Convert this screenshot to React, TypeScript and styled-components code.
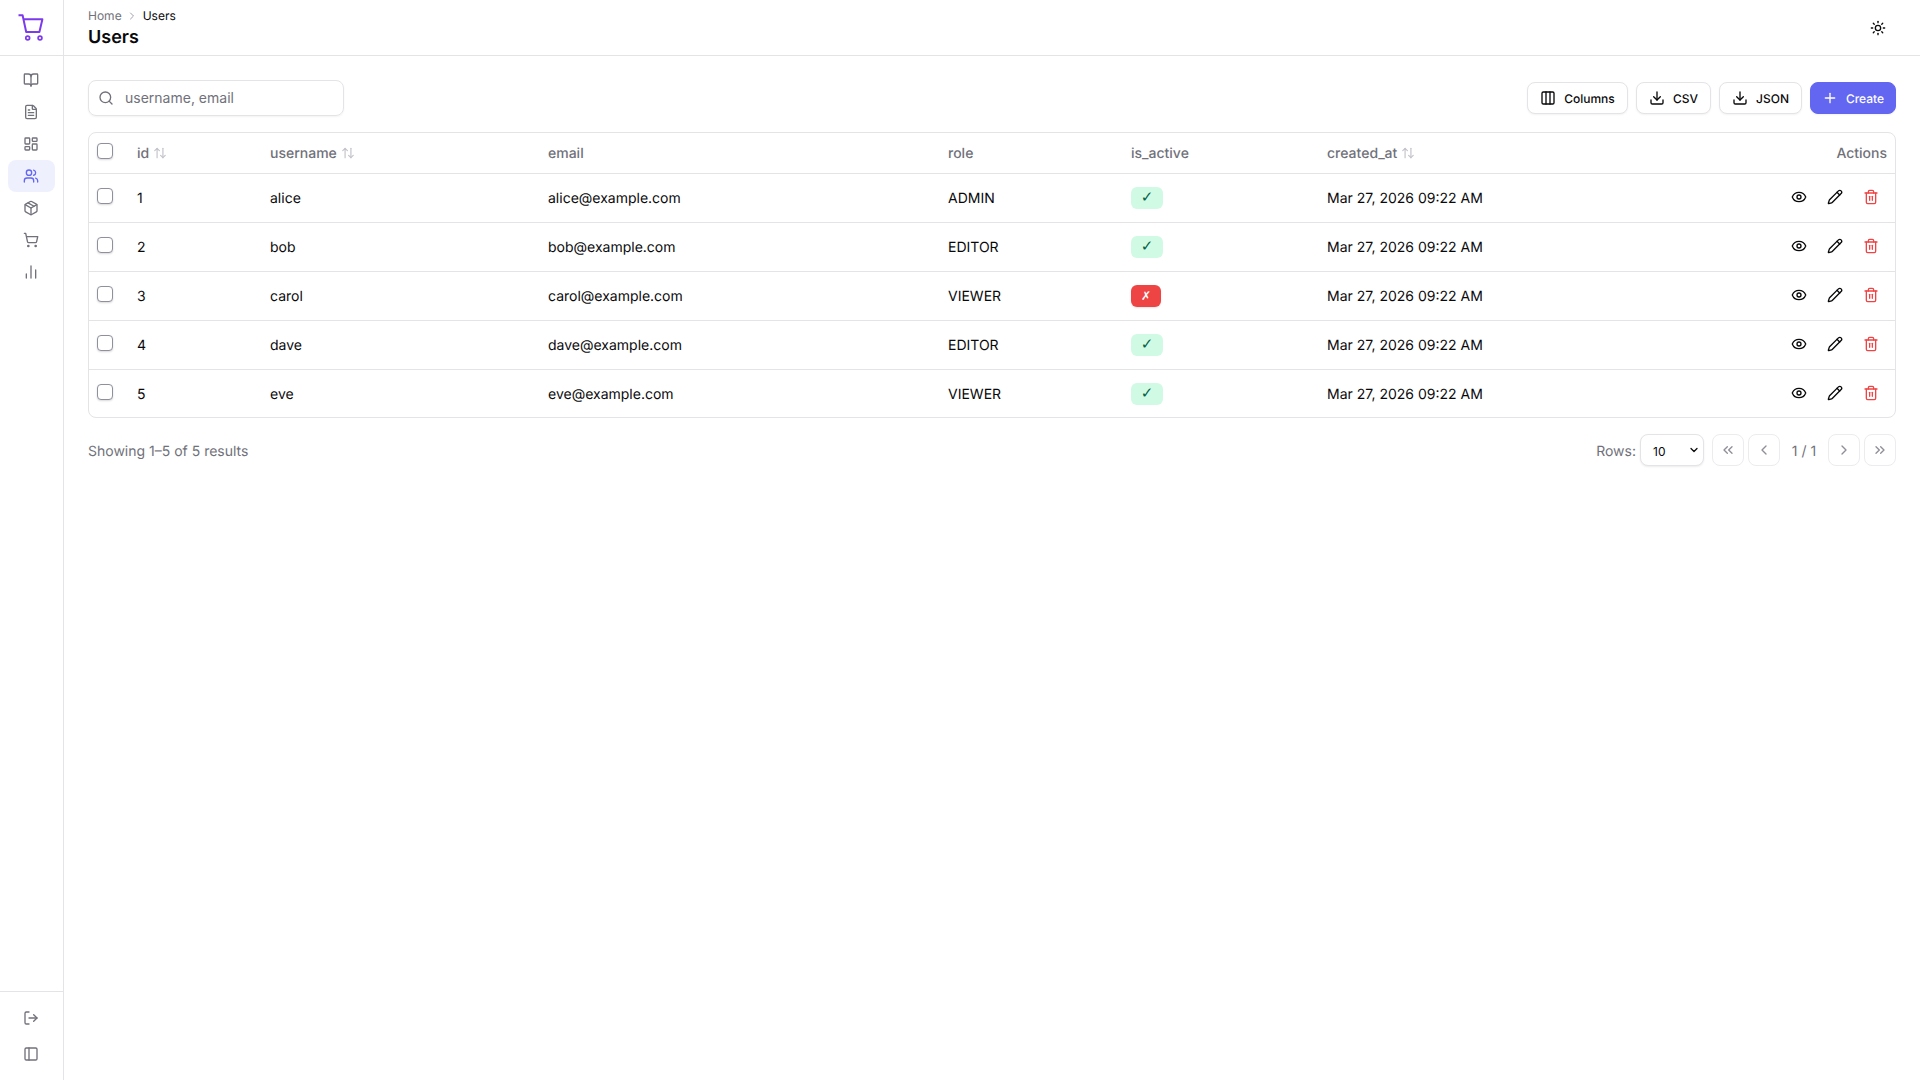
import React from "react";
import styled, { createGlobalStyle } from "styled-components";
import {
  ArrowUpDown,
  BookOpen,
  ChartNoAxesColumn,
  ChevronDown,
  ChevronLeft,
  ChevronRight,
  ChevronsLeft,
  ChevronsRight,
  Columns3,
  Download,
  Eye,
  FileText,
  LayoutDashboard,
  LogOut,
  Package,
  PanelLeft,
  Pencil,
  Plus,
  Search,
  ShoppingCart,
  Sun,
  Trash2,
  Users,
} from "lucide-react";

const GlobalStyle = createGlobalStyle`
  html, body { margin: 0; padding: 0; background: #fff; }
  body {
    font-family: Inter, "Liberation Sans", sans-serif;
    color: #09090b;
    text-rendering: geometricPrecision;
  }
  * { box-sizing: border-box; }
`;

const Shell = styled.div`
  display: flex;
  width: 100%;
  height: 100vh;
  overflow: hidden;
`;

const Sidebar = styled.aside`
  width: 64px;
  flex-shrink: 0;
  display: flex;
  flex-direction: column;
  border-right: 1px solid #e4e4e7;
`;

const LogoBox = styled.div`
  height: 56px;
  display: flex;
  align-items: center;
  justify-content: center;
  padding: 0 2px 0 1px;
  border-bottom: 1px solid #e4e4e7;
  flex-shrink: 0;
`;

const NavList = styled.nav`
  flex: 1;
  display: flex;
  flex-direction: column;
  padding: 8px;
`;

const NavItem = styled.div<{ $active?: boolean }>`
  height: 32px;
  display: flex;
  align-items: center;
  justify-content: center;
  padding-right: 1px;
  border-radius: 8px;
  color: ${(p) => (p.$active ? "#6366f1" : "#71717a")};
  background: ${(p) => (p.$active ? "#eef0fe" : "transparent")};
`;

const SidebarFoot = styled.div`
  border-top: 1px solid #e4e4e7;
  padding: 10px 8px;
  display: flex;
  flex-direction: column;
  gap: 4px;
`;

const Main = styled.div`
  flex: 1;
  min-width: 0;
  display: flex;
  flex-direction: column;
`;

const Header = styled.header`
  height: 56px;
  flex-shrink: 0;
  display: flex;
  align-items: center;
  justify-content: space-between;
  padding: 0 24px;
  border-bottom: 1px solid #e4e4e7;
`;

const HeaderText = styled.div`
  align-self: flex-start;
  padding-top: 8px;
`;

const Crumbs = styled.div`
  display: flex;
  align-items: center;
  gap: 4.5px;
  font-size: 12px;
  line-height: 16px;
  color: #71717a;
  svg { color: #a1a1aa; }
`;

const CrumbCurrent = styled.span`
  color: #09090b;
`;

const Title = styled.h1`
  margin: 3px 0 0;
  font-size: 18px;
  line-height: 22px;
  font-weight: 600;
  color: #09090b;
`;

const IconGhost = styled.div`
  width: 36px;
  height: 32px;
  display: flex;
  align-items: center;
  justify-content: center;
`;

const Content = styled.main`
  padding: 24px;
  display: flex;
  flex-direction: column;
`;

const Toolbar = styled.div`
  display: flex;
  align-items: center;
  justify-content: space-between;
  height: 36px;
  margin-bottom: 16px;
`;

const SearchBox = styled.label`
  width: 256px;
  height: 36px;
  display: flex;
  align-items: center;
  gap: 11px;
  padding: 0 10px 0 9px;
  border: 1px solid #e4e4e7;
  border-radius: 8px;
  box-shadow: 0 1px 2px rgba(0, 0, 0, 0.05);
  color: #71717a;
`;

const SearchInput = styled.input`
  flex: 1;
  min-width: 0;
  border: 0;
  outline: 0;
  padding: 0 0 1px;
  font: inherit;
  font-size: 14px;
  color: #09090b;
  &::placeholder { color: #71717a; }
`;

const Actions = styled.div`
  display: flex;
  gap: 8px;
`;

const Button = styled.button<{ $primary?: boolean; $w: number }>`
  width: ${(p) => p.$w}px;
  height: 32px;
  display: flex;
  align-items: center;
  justify-content: center;
  gap: 8px;
  padding: 0;
  border-radius: 8px;
  font-family: inherit;
  font-size: 12px;
  font-weight: 500;
  text-rendering: geometricPrecision;
  border: 1px solid ${(p) => (p.$primary ? "#6366f1" : "#e4e4e7")};
  background: ${(p) => (p.$primary ? "#6366f1" : "#fff")};
  color: ${(p) => (p.$primary ? "#fff" : "#09090b")};
  box-shadow: 0 1px 2px rgba(0, 0, 0, 0.05);
`;

const TableWrap = styled.div`
  border: 1px solid #e4e4e7;
  border-radius: 8px;
  overflow: hidden;
`;

const Table = styled.table`
  width: 100%;
  table-layout: fixed;
  border-collapse: separate;
  border-spacing: 0;
  font-size: 14px;
`;

const Th = styled.th<{ $w?: number; $right?: boolean }>`
  width: ${(p) => (p.$w ? `${p.$w}px` : "auto")};
  height: 41px;
  padding: 0 8px;
  text-align: ${(p) => (p.$right ? "right" : "left")};
  font-weight: 500;
  color: #71717a;
  border-bottom: 1px solid #e4e4e7;
`;

const Td = styled.td`
  height: 49px;
  padding: 0 8px;
  border-bottom: 1px solid #e4e4e7;
  tr:last-child & {
    border-bottom: 0;
    height: 47px;
    padding-top: 1px;
  }
`;

const HeadLabel = styled.span`
  display: inline-flex;
  align-items: center;
  gap: 4px;
  svg { color: #c4c4ca; }
`;

const Check = styled.input.attrs({ type: "checkbox" })`
  appearance: none;
  display: block;
  width: 16px;
  height: 16px;
  margin: 0 0 4px;
  border: 1px solid #8f8f9d;
  border-radius: 4px;
  background: #fff;
  box-shadow: 0 1px 2px rgba(0, 0, 0, 0.15);
`;

const Badge = styled.span<{ $ok: boolean }>`
  display: inline-flex;
  align-items: center;
  justify-content: center;
  width: ${(p) => (p.$ok ? "32px" : "30px")};
  height: 22px;
  padding-bottom: ${(p) => (p.$ok ? "2px" : "0")};
  border-radius: 6px;
  font-size: ${(p) => (p.$ok ? "15px" : "12px")};
  font-weight: ${(p) => (p.$ok ? 700 : 500)};
  font-family: "DejaVu Sans", sans-serif;
  background: ${(p) => (p.$ok ? "#d1fae5" : "#ef4444")};
  color: ${(p) => (p.$ok ? "#065f46" : "#fff")};
  box-shadow: ${(p) => (p.$ok ? "none" : "0 1px 2px rgba(0, 0, 0, 0.1)")};
  vertical-align: middle;
`;

const RowActions = styled.div`
  display: flex;
  justify-content: flex-end;
  gap: 20px;
  padding-right: 8px;
  margin-bottom: 2px;
  color: #09090b;
`;

const DeleteIcon = styled.span`
  display: flex;
  color: #ef4444;
`;

const Footer = styled.div`
  display: flex;
  align-items: center;
  justify-content: space-between;
  margin-top: 16px;
  height: 32px;
`;

const Summary = styled.span`
  padding-top: 2px;
  font-size: 14px;
  color: #71717a;
`;

const Pager = styled.div`
  display: flex;
  align-items: center;
  gap: 4px;
  font-size: 14px;
  color: #71717a;
`;

const RowsLabel = styled.span`
  padding-top: 2px;
`;

const SelectWrap = styled.div`
  position: relative;
  width: 64px;
  height: 32px;
  margin-right: 4px;
  color: #09090b;
  svg {
    position: absolute;
    top: 10px;
    right: 4px;
    pointer-events: none;
  }
`;

const RowsSelect = styled.select`
  appearance: none;
  display: block;
  width: 100%;
  height: 100%;
  padding: 2px 20px 0 12px;
  border: 1px solid #e4e4e7;
  border-radius: 8px;
  background: #fff;
  font-family: inherit;
  font-size: 12px;
  color: #09090b;
  box-shadow: 0 1px 2px rgba(0, 0, 0, 0.08);
`;

const PageButton = styled.button`
  width: 32px;
  height: 32px;
  display: flex;
  align-items: center;
  justify-content: center;
  padding: 0;
  border: 1px solid #ececef;
  border-radius: 8px;
  background: #fff;
  color: #8f8f98;
`;

const PageLabel = styled.span`
  width: 40px;
  padding-top: 2px;
  text-align: center;
`;

const users = [
  { id: 1, username: "alice", email: "alice@example.com", role: "ADMIN", active: true },
  { id: 2, username: "bob", email: "bob@example.com", role: "EDITOR", active: true },
  { id: 3, username: "carol", email: "carol@example.com", role: "VIEWER", active: false },
  { id: 4, username: "dave", email: "dave@example.com", role: "EDITOR", active: true },
  { id: 5, username: "eve", email: "eve@example.com", role: "VIEWER", active: true },
];

const navIcons = [BookOpen, FileText, LayoutDashboard, Users, Package, ShoppingCart, ChartNoAxesColumn];

const SortHead: React.FC<{ label: string }> = ({ label }) => (
  <HeadLabel>
    {label}
    <ArrowUpDown size={14} />
  </HeadLabel>
);

const Logo = () => (
  <svg width="26" height="28" viewBox="0 0 26 28" fill="none" stroke="#7c3aed" strokeWidth="2" strokeLinejoin="round">
    <path d="M0.5 1.2H4.6L8.2 18H21.4L24.4 5.2H5.6" />
    <circle cx="9.7" cy="24" r="1.9" strokeWidth="1.7" />
    <circle cx="22" cy="24" r="1.9" strokeWidth="1.7" />
  </svg>
);

export default function App() {
  return (
    <Shell>
      <GlobalStyle />
      <Sidebar>
        <LogoBox>
          <Logo />
        </LogoBox>
        <NavList>
          {navIcons.map((Icon, i) => (
            <NavItem key={i} $active={i === 3}>
              <Icon size={16} />
            </NavItem>
          ))}
        </NavList>
        <SidebarFoot>
          <NavItem>
            <LogOut size={16} />
          </NavItem>
          <NavItem>
            <PanelLeft size={16} />
          </NavItem>
        </SidebarFoot>
      </Sidebar>
      <Main>
        <Header>
          <HeaderText>
            <Crumbs>
              <span>Home</span>
              <ChevronRight size={12} />
              <CrumbCurrent>Users</CrumbCurrent>
            </Crumbs>
            <Title>Users</Title>
          </HeaderText>
          <IconGhost>
            <Sun size={16} />
          </IconGhost>
        </Header>
        <Content>
          <Toolbar>
            <SearchBox>
              <Search size={16} />
              <SearchInput placeholder="username, email" />
            </SearchBox>
            <Actions>
              <Button $w={101}>
                <Columns3 size={16} />
                Columns
              </Button>
              <Button $w={75}>
                <Download size={16} />
                CSV
              </Button>
              <Button $w={83}>
                <Download size={16} />
                JSON
              </Button>
              <Button $primary $w={86}>
                <Plus size={16} />
                Create
              </Button>
            </Actions>
          </Toolbar>
          <TableWrap>
            <Table>
              <thead>
                <tr>
                  <Th $w={40}>
                    <Check />
                  </Th>
                  <Th $w={133}>
                    <SortHead label="id" />
                  </Th>
                  <Th $w={278}>
                    <SortHead label="username" />
                  </Th>
                  <Th $w={400}>email</Th>
                  <Th $w={183}>role</Th>
                  <Th $w={196}>is_active</Th>
                  <Th $w={300}>
                    <SortHead label="created_at" />
                  </Th>
                  <Th $right>Actions</Th>
                </tr>
              </thead>
              <tbody>
                {users.map((u) => (
                  <tr key={u.id}>
                    <Td>
                      <Check />
                    </Td>
                    <Td>{u.id}</Td>
                    <Td>{u.username}</Td>
                    <Td>{u.email}</Td>
                    <Td>{u.role}</Td>
                    <Td>
                      <Badge $ok={u.active}>{u.active ? "✓" : "✗"}</Badge>
                    </Td>
                    <Td>Mar 27, 2026 09:22 AM</Td>
                    <Td>
                      <RowActions>
                        <Eye size={16} />
                        <Pencil size={16} />
                        <DeleteIcon>
                          <Trash2 size={16} />
                        </DeleteIcon>
                      </RowActions>
                    </Td>
                  </tr>
                ))}
              </tbody>
            </Table>
          </TableWrap>
          <Footer>
            <Summary>Showing 1–5 of 5 results</Summary>
            <Pager>
              <RowsLabel>Rows:</RowsLabel>
              <SelectWrap>
                <RowsSelect defaultValue="10">
                  <option value="10">10</option>
                  <option value="25">25</option>
                  <option value="50">50</option>
                </RowsSelect>
                <ChevronDown size={12} strokeWidth={2.5} />
              </SelectWrap>
              <PageButton>
                <ChevronsLeft size={16} />
              </PageButton>
              <PageButton>
                <ChevronLeft size={16} />
              </PageButton>
              <PageLabel>1 / 1</PageLabel>
              <PageButton>
                <ChevronRight size={16} />
              </PageButton>
              <PageButton>
                <ChevronsRight size={16} />
              </PageButton>
            </Pager>
          </Footer>
        </Content>
      </Main>
    </Shell>
  );
}
